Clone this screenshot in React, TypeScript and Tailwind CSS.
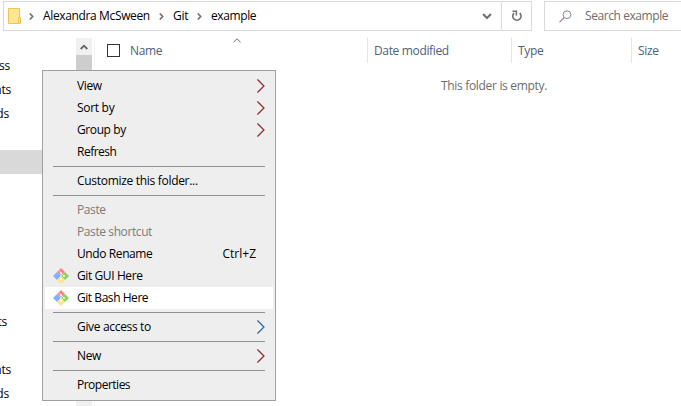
import type { ReactNode } from "react";

function Chevron() {
  return (
    <svg width="5" height="7" viewBox="0 0 5 7" className="shrink-0">
      <path d="M0.8 0.5L3.7 3.5L0.8 6.5" fill="none" stroke="#757575" strokeWidth="1.7" />
    </svg>
  );
}

function SubmenuArrow({ color }: { color: string }) {
  return (
    <svg width="10" height="14" viewBox="-1 0 10 14" className="absolute right-[7px] top-[4px]">
      <path d="M1.1 0.5L7.6 7L1.1 13.5" fill="none" stroke="#8fbfe8" strokeWidth="0.7" />
      <path d="M0.4 0.5L6.9 7L0.4 13.5" fill="none" stroke={color} strokeWidth="1.1" />
    </svg>
  );
}

function GitIcon() {
  return (
    <svg width="16" height="16" viewBox="0 0 16 16" className="absolute left-[8px] top-[3px]">
      <path d="M8 0L12 4L8 8L4 4Z" fill="#ff8080" />
      <path d="M4 4L8 8L4 12L0 8Z" fill="#80b3ff" />
      <path d="M12 4L16 8L12 12L8 8Z" fill="#8bd35f" />
      <path d="M8 8L12 12L8 16L4 12Z" fill="#ffe680" />
      <path d="M6 2.6L8 5V11M8 5L11 8" fill="none" stroke="#fff" strokeWidth="0.7" />
      <circle cx="8" cy="5" r="0.9" fill="#fff" />
      <circle cx="8" cy="11" r="0.9" fill="#fff" />
      <circle cx="11" cy="8" r="0.9" fill="#fff" />
    </svg>
  );
}

function Item({ label, track = "tracking-[-0.4px]", arrow, shortcut, disabled, git, active }: {
  label: string; track?: string; arrow?: string; shortcut?: string; disabled?: boolean; git?: boolean; active?: boolean;
}) {
  return (
    <div className={`relative flex h-[22px] items-center pl-[32px] pr-[17px] ${active ? "bg-white" : ""} ${disabled ? "text-[#7b7b7b]" : "text-black"}`}>
      {git && <GitIcon />}
      <span className={track}>{label}</span>
      {shortcut && <span className="ml-auto">{shortcut}</span>}
      {arrow && <SubmenuArrow color={arrow} />}
    </div>
  );
}

function Separator() {
  return <div className="mx-[8px] my-[3px] h-px bg-[#919191]" />;
}

function Side({ children, w }: { children?: ReactNode; w: string }) {
  return <div className={`flex h-[24px] items-center justify-end tracking-[-0.2px] ${w}`}>{children}</div>;
}

export default function App() {
  return (
    <div className="relative flex h-[406px] w-[681px] flex-col overflow-hidden whitespace-nowrap bg-white font-['Open_Sans','Noto_Sans',sans-serif] text-[12px] leading-[16px] text-black">
      <div className="flex h-[38px] shrink-0 items-start pl-[3px] pt-px">
        <div className="flex h-[30px] w-[529px] shrink-0 border border-[#d9d9d9]">
          <div className="flex w-[497px] shrink-0 items-center pl-[4px]">
            <svg width="14" height="17" viewBox="0 0 14 17" className="shrink-0">
              <path d="M0.5 0.5H11.5V15.5H0.5Z" fill="#ffe694" stroke="#edc653" />
              <path d="M10.5 9.5H12.5V15.5H10.5Z" fill="#ffe694" stroke="#edc653" />
            </svg>
            <span className="ml-[7px] flex"><Chevron /></span>
            <span className="ml-[9px] w-[107px] tracking-[-0.36px]">Alexandra McSween</span>
            <span className="ml-[9px] flex"><Chevron /></span>
            <span className="ml-[9px] w-[15px] tracking-[-0.2px]">Git</span>
            <span className="ml-[9px] flex"><Chevron /></span>
            <span className="ml-[9px] tracking-[-0.4px]">example</span>
            <svg width="10" height="7" viewBox="0 0 10 7" className="ml-auto mr-[9px]">
              <path d="M1 1L5 5L9 1" fill="none" stroke="#707070" strokeWidth="2" />
            </svg>
          </div>
          <div className="flex flex-1 items-center justify-center border-l border-[#d9d9d9]">
            <svg width="12" height="12" viewBox="0 0 12 12">
              <path d="M3 3.2A4.1 4.1 0 1 0 8.8 3.2" fill="none" stroke="#707070" strokeWidth="1.7" />
              <path d="M1.5 1.3H5.4V5.4" fill="none" stroke="#707070" strokeWidth="1.5" />
            </svg>
          </div>
        </div>
        <div className="ml-[12px] flex h-[30px] w-[150px] shrink-0 items-center border border-[#d9d9d9] pl-[14px] text-[#6d6d6d]">
          <svg width="13" height="13" viewBox="0 0 13 13" className="shrink-0">
            <circle cx="8" cy="4.7" r="3.9" fill="none" stroke="#8585a0" />
            <path d="M5.2 7.5L0.5 12.3" stroke="#9b8a92" strokeWidth="1.2" />
          </svg>
          <span className="ml-[13px] tracking-[-0.42px]">Search example</span>
        </div>
      </div>

      <div className="flex min-h-0 flex-1">
        <div className="w-[76px] shrink-0 pt-[16px]">
          <Side w="w-[10px]">ess</Side>
          <Side w="w-[11px]">nts</Side>
          <Side w="w-[9px]">ads</Side>
          <div className="mt-[24px] h-[24px] bg-[#d9d9d9]" />
          <div className="h-[136px]" />
          <Side w="w-[7px]">cts</Side>
          <div className="h-[24px]" />
          <Side w="w-[11px]">nts</Side>
          <Side w="w-[9px]">ads</Side>
        </div>
        <div className="w-[16px] shrink-0 bg-[#f0f0f0]">
          <div className="flex h-[17px] items-center justify-center">
            <svg width="8" height="6" viewBox="0 0 8 6">
              <path d="M0.7 5L4 1.7L7.3 5" fill="none" stroke="#606060" strokeWidth="1.8" />
            </svg>
          </div>
          <div className="h-[100px] bg-[#cdcdcd]" />
        </div>
        <div className="ml-[2px] flex-1 border-l border-[#f3f3f3]">
          <div className="flex h-[25px] items-center tracking-[-0.35px] text-[#4c607a]">
            <div className="relative flex h-full w-[273px] items-center border-r border-[#e5e5e5] pl-[12px]">
              <span className="h-[13px] w-[13px] border border-[#333]" />
              <span className="ml-[10px]">Name</span>
              <svg width="8" height="5" viewBox="0 0 8 5" className="absolute left-[138px] top-0">
                <path d="M0.4 4.3L4 0.8L7.6 4.3" fill="none" stroke="#707070" />
              </svg>
            </div>
            <div className="flex h-full w-[144px] items-center border-r border-[#e5e5e5] pl-[6px]">Date modified</div>
            <div className="flex h-full w-[120px] items-center border-r border-[#e5e5e5] pl-[6px]">Type</div>
            <div className="pl-[6px]">Size</div>
          </div>
          <div className="pl-[346px] pt-[15px] tracking-[-0.32px] text-[#6d6d6d]">This folder is empty.</div>
        </div>
      </div>

      <div className="absolute left-[42px] top-[70px] h-[331px] w-[234px] border border-[#a0a0a0] bg-[#eeeeee] px-[2px] py-[4px]">
        <Item label="View" arrow="#96222a" />
        <Item label="Sort by" arrow="#96222a" track="tracking-[-0.3px]" />
        <Item label="Group by" arrow="#96222a" />
        <Item label="Refresh" track="tracking-[-0.5px]" />
        <Separator />
        <Item label="Customize this folder..." track="tracking-[-0.3px]" />
        <Separator />
        <Item label="Paste" disabled />
        <Item label="Paste shortcut" disabled />
        <Item label="Undo Rename" shortcut="Ctrl+Z" />
        <Item label="Git GUI Here" git />
        <Item label="Git Bash Here" git active track="tracking-[-0.45px]" />
        <Separator />
        <Item label="Give access to" arrow="#23699c" track="tracking-[-0.33px]" />
        <Separator />
        <Item label="New" arrow="#96222a" />
        <Separator />
        <Item label="Properties" track="tracking-[-0.5px]" />
      </div>
    </div>
  );
}
